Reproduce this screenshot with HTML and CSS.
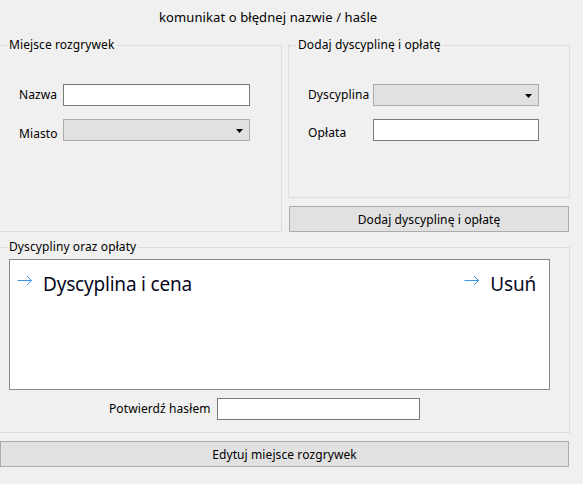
FILE: index.html
```html
<!DOCTYPE html>
<html lang="pl">
<head>
<meta charset="utf-8">
<title>Edytuj miejsce rozgrywek</title>
<link rel="stylesheet" href="styles.css">
</head>
<body>
<div class="message">komunikat o błędnej nazwie / haśle</div>
<div class="top">
  <fieldset class="group group-place">
    <legend>Miejsce rozgrywek</legend>
    <div class="form">
      <div class="row">
        <span class="label lbl-place">Nazwa</span>
        <input class="textbox tb-place" type="text">
      </div>
      <div class="row">
        <span class="label lbl-place low4">Miasto</span>
        <div class="combo cb-place"><svg class="caret" width="7" height="4" viewBox="0 0 7 4"><polygon points="0,0 7,0 3.5,4" fill="#000"/></svg></div>
      </div>
    </div>
  </fieldset>
  <div class="right-col">
    <fieldset class="group group-add">
      <legend>Dodaj dyscyplinę i opłatę</legend>
      <div class="form">
        <div class="row">
          <span class="label lbl-add">Dyscyplina</span>
          <div class="combo cb-add"><svg class="caret" width="7" height="4" viewBox="0 0 7 4"><polygon points="0,0 7,0 3.5,4" fill="#000"/></svg></div>
        </div>
        <div class="row">
          <span class="label lbl-add low3">Opłata</span>
          <input class="textbox tb-add" type="text">
        </div>
      </div>
    </fieldset>
    <button class="btn btn-add" type="button">Dodaj dyscyplinę i opłatę</button>
  </div>
</div>
<fieldset class="group group-list">
  <legend>Dyscypliny oraz opłaty</legend>
  <div class="list">
    <div class="list-row">
      <div class="item">
        <svg class="arrow" width="16" height="11" viewBox="0 0 16 11"><path d="M0.5 5.5 H14.5 M10 1 L14.5 5.5 L10 10" fill="none" stroke="#3c96e6" stroke-width="1"/></svg>
        <span>Dyscyplina i cena</span>
      </div>
      <div class="item">
        <svg class="arrow" width="16" height="11" viewBox="0 0 16 11"><path d="M0.5 5.5 H14.5 M10 1 L14.5 5.5 L10 10" fill="none" stroke="#3c96e6" stroke-width="1"/></svg>
        <span>Usuń</span>
      </div>
    </div>
  </div>
  <div class="confirm">
    <span class="label lbl-confirm">Potwierdź hasłem</span>
    <input class="textbox tb-confirm" type="password">
  </div>
</fieldset>
<button class="btn btn-edit" type="button">Edytuj miejsce rozgrywek</button>
</body>
</html>
```
FILE: styles.css
```css
* { box-sizing: border-box; }
html, body { margin: 0; padding: 0; }
body {
  background: #f0f0f0;
  font-family: "Noto Sans", "Open Sans", sans-serif;
  font-size: 12px;
  letter-spacing: 0.1px;
  color: #000;
  width: 583px;
  height: 484px;
  overflow: hidden;
}
.message {
  height: 16px;
  line-height: 16px;
  margin-top: 9px;
  padding-left: 159px;
  font-size: 13px;
  white-space: nowrap;
}
.top {
  display: flex;
  gap: 6px;
  margin-top: 12px;
  margin-left: -1px;
}
.group {
  border: 1px solid #dcdcdc;
  margin: 0;
  padding: 0 7px;
  min-width: 0;
}
.group legend {
  padding: 0 2px;
  height: 16px;
  line-height: 16px;
  white-space: nowrap;
}
.group-place { width: 283px; height: 195px; flex: none; }
.right-col { width: 282px; flex: none; display: flex; flex-direction: column; }
.group-add { width: 282px; height: 161px; }
.form {
  margin-top: 31px;
  padding-left: 12px;
  display: flex;
  flex-direction: column;
  gap: 13px;
}
.row { display: flex; align-items: center; height: 22px; }
.label { flex: none; white-space: nowrap; line-height: 16px; }
.low4 { padding-top: 8px; }
.low3 { padding-top: 6px; }
.lbl-place { width: 44px; }
.lbl-add { width: 65px; }
.textbox {
  height: 22px;
  border: 1px solid #7a7a7a;
  background: #fff;
  margin: 0;
  padding: 0 3px;
  font: inherit;
  outline: none;
}
.tb-place { width: 187px; }
.tb-add { width: 166px; }
.combo {
  height: 22px;
  border: 1px solid #adadad;
  background: #e1e1e1;
  display: flex;
  align-items: center;
  justify-content: flex-end;
  padding-right: 6px;
}
.cb-place { width: 187px; }
.cb-add { width: 166px; }
.caret { display: block; margin-top: 1px; }
.btn {
  background: #e1e1e1;
  border: 1px solid #adadad;
  font: inherit;
  letter-spacing: 0.1px;
  color: #000;
  height: 26px;
  padding: 0;
  margin: 0;
  display: block;
}
.btn-add { margin-top: 8px; margin-left: 1px; width: 280px; }
.group-list {
  margin-top: 7px;
  margin-left: -1px;
  width: 571px;
  height: 194px;
}
.list {
  margin-top: 4px;
  margin-left: 2px;
  width: 541px;
  height: 131px;
  background: #fff;
  border: 1px solid #828790;
}
.list-row {
  display: flex;
  justify-content: space-between;
  padding: 12px 13px 0 7px;
}
.item {
  display: flex;
  align-items: flex-start;
  gap: 10px;
  font-size: 19px;
  letter-spacing: -0.2px;
  line-height: 24px;
  color: #0a0a1e;
  white-space: nowrap;
}
.arrow { display: block; margin-top: 3px; flex: none; }
.confirm {
  display: flex;
  align-items: center;
  height: 22px;
  margin-top: 8px;
  padding-left: 102px;
}
.lbl-confirm { width: 108px; }
.tb-confirm { width: 203px; }
.btn-edit { margin-top: 8px; width: 569px; }
```
